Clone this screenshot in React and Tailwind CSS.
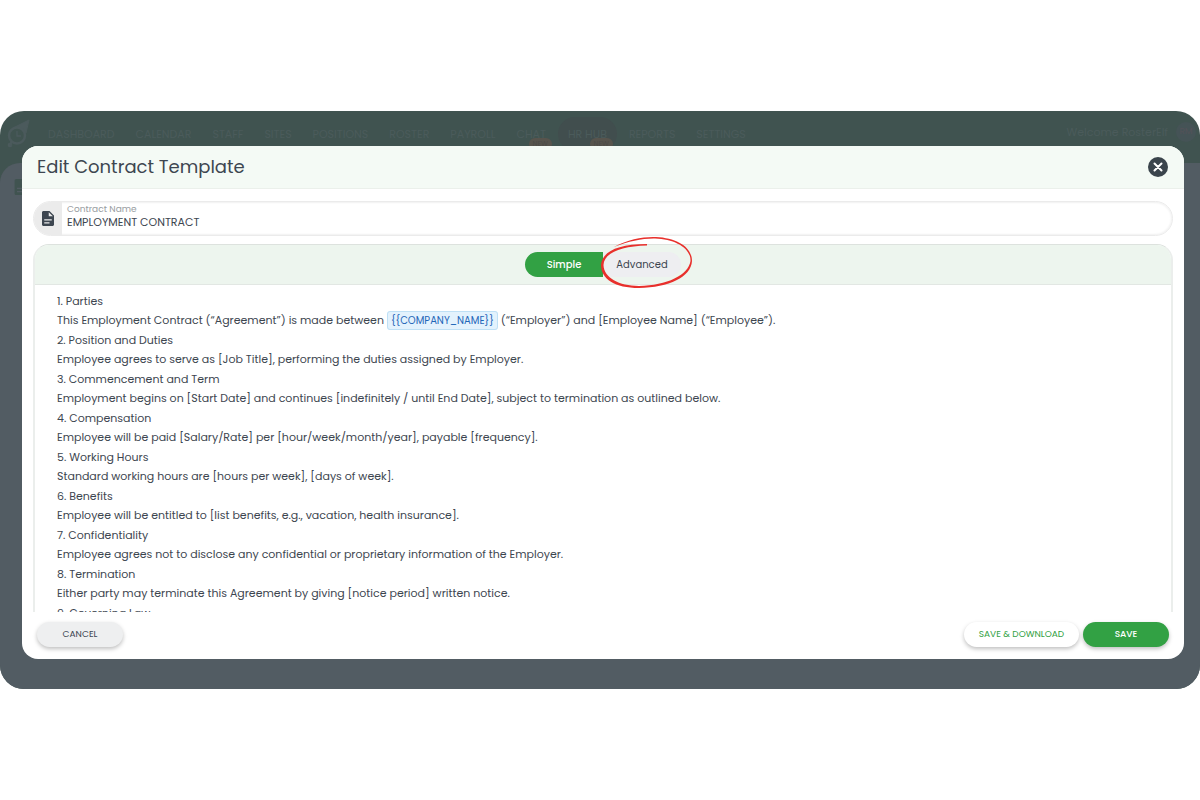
import React, { useState } from "react";

const NAV = ["DASHBOARD", "CALENDAR", "STAFF", "SITES", "POSITIONS", "ROSTER", "PAYROLL", "CHAT", "HR HUB", "REPORTS", "SETTINGS"];

const CLAUSES = [
  ["Parties", null],
  ["Position and Duties", "Employee agrees to serve as [Job Title], performing the duties assigned by Employer."],
  ["Commencement and Term", "Employment begins on [Start Date] and continues [indefinitely / until End Date], subject to termination as outlined below."],
  ["Compensation", "Employee will be paid [Salary/Rate] per [hour/week/month/year], payable [frequency]."],
  ["Working Hours", "Standard working hours are [hours per week], [days of week]."],
  ["Benefits", "Employee will be entitled to [list benefits, e.g., vacation, health insurance]."],
  ["Confidentiality", "Employee agrees not to disclose any confidential or proprietary information of the Employer."],
  ["Termination", "Either party may terminate this Agreement by giving [notice period] written notice."],
  ["Governing Law", "This Agreement is governed by the laws of [State/Country]."],
];

function DocIcon({ className }) {
  return (
    <svg viewBox="4 2 16 20" className={className} fill="currentColor" aria-hidden="true">
      <path d="M14 2H6c-1.1 0-2 .9-2 2v16c0 1.100.9 2 2 2H18c1.100 0 2-.9 2-2V8l-6-6zM14 18.500H7V17h7V18.500zM17 14.500H7V13h10v1.500zM13 9V3.500L18.500 9H13z" />
    </svg>
  );
}

function Logo() {
  return (
    <svg viewBox="0 0 24 30" className="h-[30px] w-6 text-[#4b5a5c]" fill="none" stroke="currentColor" aria-hidden="true">
      <path d="M23 1 L8 8.500 L15 9 L20 14 Z" fill="currentColor" strokeWidth="1" strokeLinejoin="round" />
      <circle cx="11" cy="16.500" r="8" strokeWidth="2.500" />
      <path d="M11 12V17H15" strokeWidth="1.300" />
      <circle cx="4" cy="26" r="2.300" fill="currentColor" stroke="none" />
      <path d="M6 22L4 26" strokeWidth="2.500" />
    </svg>
  );
}

function Backdrop() {
  return (
    <div className="absolute inset-0 bg-[#405350]" aria-hidden="true">
      <div className="flex h-[52px] items-start pl-[6px] pr-1 text-[11px] text-[#4b5b5b]">
        <div className="w-[42px] pt-2">
          <Logo />
        </div>
        <nav className="flex gap-[21px] pt-[6px]">
          {NAV.map((n) => (
            <a
              key={n}
              href="#"
              className={
                n === "HR HUB"
                  ? "relative -mx-[9px] rounded-full bg-[#414e4e] px-[10px] leading-[34px]"
                  : "relative leading-[34px]"
              }
            >
              {n}
              {n === "CHAT" && (
                <span className="absolute -right-[6px] top-[21px] rounded-full bg-[#57544d] px-1 text-[7px] leading-3 text-[#4c4b48]">NEW</span>
              )}
              {n === "HR HUB" && (
                <span className="absolute right-1 top-[21px] rounded-full bg-[#57544d] px-1 text-[7px] leading-3 text-[#4c4b48]">NEW</span>
              )}
            </a>
          ))}
        </nav>
        <div className="ml-auto flex items-center gap-2 pt-[11px]">
          <span>Welcome RosterElf</span>
          <span className="flex size-5 items-center justify-center rounded-full bg-[#455356] text-[9px] text-[#535259]">RM</span>
        </div>
      </div>
      <div className="h-full rounded-tl-[20px] bg-[#525c63] pl-[14px] pt-4">
        <DocIcon className="h-4 w-[14px] text-[#405350]" />
      </div>
    </div>
  );
}

function HandDrawnCircle() {
  return (
    <svg
      viewBox="0 0 94 54"
      className="pointer-events-none absolute -left-[3px] -top-[17px] h-[54px] w-[94px] max-w-none"
      fill="#e8302c"
      aria-hidden="true"
    >
      <path d="M14 12 C28 4 44 1.500 56 2 C77 3 92 12 92 26 C91 42 69 52.500 39 53 C15 53 1 44 1 30 C2 17 17 9 47 9 L47 10.500 C21 11 4 18 3.500 30 C4 43 19 50.800 39 51 C67 50.500 88.500 40 90.500 26 C91 13 75 4 55 3.400 C42 3.200 29 6 14 12 Z" />
    </svg>
  );
}

export default function App() {
  const [mode, setMode] = useState("simple");
  return (
    <div className="flex min-h-screen flex-col justify-center bg-white font-['Poppins','Inter',sans-serif] text-[#3d4650]">
      <div className="relative overflow-hidden rounded-[24px] pb-[30px] pl-[22px] pr-4 pt-[35px]">
        <Backdrop />
        <section
          role="dialog"
          aria-labelledby="dialog-title"
          className="relative flex flex-col overflow-hidden rounded-[16px] bg-white"
        >
          <header className="flex h-[43px] items-center justify-between border-b border-[#ebf0eb] bg-[#f4faf5] pl-[15px] pr-4">
            <h1 id="dialog-title" className="text-[18px] leading-6">Edit Contract Template</h1>
            <button type="button" aria-label="Close" className="flex size-5 items-center justify-center rounded-full bg-[#3a444c] text-white">
              <svg viewBox="0 0 20 20" className="size-5" fill="none" stroke="currentColor" strokeWidth="2" strokeLinecap="round" aria-hidden="true">
                <path d="M6.500 6.500L13.500 13.500M13.500 6.500L6.500 13.500" />
              </svg>
            </button>
          </header>

          <div className="flex flex-col gap-2 px-[11px] pt-3">
            <div className="flex h-[35px] overflow-hidden rounded-full border border-[#ebebeb] bg-white shadow-[inset_0_0_2px_1px_rgba(0,0,0,0.06)]">
              <div className="flex w-[28px] shrink-0 items-center justify-center bg-[#ebebeb]">
                <DocIcon className="h-[15px] w-3" />
              </div>
              <div className="flex flex-1 flex-col pl-[5px] pt-px">
                <label htmlFor="contract-name" className="text-[9px] leading-3 text-[#999da1]">Contract Name</label>
                <input
                  id="contract-name"
                  defaultValue="EMPLOYMENT CONTRACT"
                  className="w-full bg-transparent text-[11px] leading-[14px] outline-none"
                />
              </div>
            </div>

            <div className="rounded-t-[16px] border-x-2 border-t border-x-[#ebeeec] border-t-[#dde2de]">
              <div className="flex h-10 items-center justify-center rounded-t-[14px] border-b border-[#e2e7e3] bg-[#edf5ee] text-[10px]">
                <button
                  type="button"
                  aria-pressed={mode === "simple"}
                  onClick={() => setMode("simple")}
                  className="h-[25px] w-[78px] rounded-l-full bg-[#32a144] font-medium text-white"
                >
                  Simple
                </button>
                <div className="relative">
                  <button
                    type="button"
                    aria-pressed={mode === "advanced"}
                    onClick={() => setMode("advanced")}
                    className="h-[25px] w-[78px] rounded-r-full bg-[#eeeef1]"
                  >
                    Advanced
                  </button>
                  <HandDrawnCircle />
                </div>
              </div>
              <div
                role="textbox"
                aria-multiline="true"
                aria-label="Contract text"
                contentEditable
                suppressContentEditableWarning
                className="h-[327px] overflow-y-auto px-[22px] pt-[6px] text-[11px] outline-none [scrollbar-width:none]"
              >
                {CLAUSES.map(([title, text], i) => (
                  <div key={title}>
                    <p className="leading-5">{i + 1}. {title}</p>
                    <p className="leading-[19px]">
                      {text || (
                        <>
                          This Employment Contract (“Agreement”) is made between{" "}
                          <span className="rounded-[3px] border border-[#bfe0f5] bg-[#e3f2fd] px-[3px] py-px text-[10px] text-[#1f66b8]">{"{{COMPANY_NAME}}"}</span>
                          {" "}(“Employer”) and [Employee Name] (“Employee”).
                        </>
                      )}
                    </p>
                  </div>
                ))}
              </div>
            </div>
          </div>

          <footer className="flex items-start gap-1 px-[15px] pb-3 pt-[10px] text-[9px]">
            <button type="button" className="mr-auto h-[25px] w-[86px] rounded-full bg-[#eeeff0] shadow-[0_2px_4px_rgba(0,0,0,0.25)]">CANCEL</button>
            <button type="button" className="h-[25px] w-[115px] rounded-full bg-white text-[#32a144] shadow-[0_2px_4px_rgba(0,0,0,0.25)]">SAVE &amp; DOWNLOAD</button>
            <button type="button" className="h-[25px] w-[86px] rounded-full bg-[#32a144] font-medium text-white shadow-[0_2px_4px_rgba(0,0,0,0.25)]">SAVE</button>
          </footer>
        </section>
      </div>
    </div>
  );
}
